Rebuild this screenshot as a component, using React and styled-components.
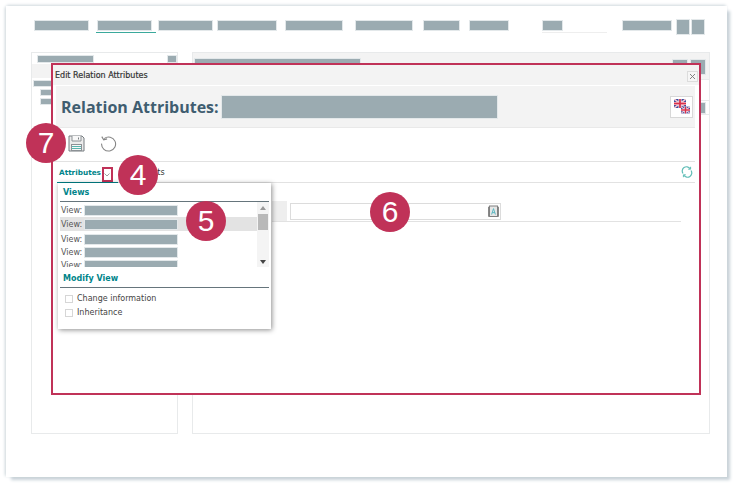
import React from 'react';
import styled, { createGlobalStyle } from 'styled-components';

const GlobalStyle = createGlobalStyle`
  html, body { margin: 0; padding: 0; background: #fff; }
  body { font-family: "DejaVu Sans", Tahoma, sans-serif; }
  * { box-sizing: border-box; }
`;

const Page = styled.div`
  position: relative;
  width: 741px;
  height: 487px;
  padding: 6px 14px 10px 6px;
  overflow: hidden;
  background: #fff;
`;

const Sheet = styled.div`
  height: 100%;
  padding: 13px 17px 43px 25px;
  background: #fff;
  display: flex;
  flex-direction: column;
  box-shadow: 0 -2px 3px -1px #d3dbdf, -2px 0 3px -1px #cfd8dc, 4px 4px 3px -1px #c8d2d8;
`;

// grey block that hides redacted text
const Mask = styled.div`
  flex: none;
  width: ${p => p.$w}px;
  height: ${p => p.$h || 11}px;
  margin-left: ${p => p.$ml || 0}px;
  background: #9babb1;
  outline: 1px solid #e3e8ea;
  outline-offset: -1px;
`;

const Nav = styled.div`
  display: flex;
  align-items: flex-start;
  height: 33px;
  padding-left: 3px;
`;

const NavItem = styled.div`
  flex: none;
  margin-left: ${p => p.$ml || 0}px;
  padding-top: 1px;
  padding-bottom: 2px;
  height: 14px;
  border-bottom: ${p => (p.$active ? '1px solid #3ba99c' : p.$faint ? '1px solid #eeeeee' : 'none')};
  width: ${p => p.$w}px;
`;

const Panels = styled.div`
  flex: 1;
  display: flex;
  gap: 14px;
`;

const Panel = styled.div`
  width: ${p => p.$w}px;
  flex: none;
  border: 1px solid #e8eaeb;
`;

const LeftTabs = styled.div`
  display: flex;
  justify-content: space-between;
  align-items: flex-start;
  height: 11px;
  padding: 2px 0 0 5px;
  background: #fff;
`;

const LeftBand = styled.div`
  height: 14px;
  background: #f3f3f3;
`;

const TreeRow = styled.div`
  margin: 2px 0 0 ${p => p.$indent}px;
`;

const RightHead = styled.div`
  display: flex;
  justify-content: space-between;
  height: 27px;
  padding: 5px 3px 0 1px;
  background: #f3f3f3;
  border-bottom: 1px solid #e8eaeb;
`;

const HeadButtons = styled.div`
  display: flex;
  gap: 2px;
  margin-top: 1px;
`;

const RightRow = styled.div`
  height: ${p => p.$h}px;
  display: flex;
  justify-content: flex-end;
  align-items: center;
  padding-right: 3px;
  border-bottom: 1px solid #e8eaeb;
`;

const Modal = styled.div`
  position: absolute;
  left: 51px;
  top: 63px;
  width: 650px;
  height: 332px;
  border: 2px solid #c03258;
  background: #fff;
  display: flex;
  flex-direction: column;
`;

const TitleBar = styled.div`
  height: 20px;
  flex: none;
  display: flex;
  align-items: center;
  justify-content: space-between;
  padding: 0 1px 0 2px;
  background: #f3f3f3;
  font-size: 8px;
  font-weight: 500;
  color: #333;
  -webkit-text-stroke: 0.2px #333;
`;

const CloseBtn = styled.div`
  width: 11px;
  height: 11px;
  margin-top: 2px;
  border: 1px solid #dcdcdc;
  background: #f6f6f6;
  color: #777;
  display: flex;
  align-items: center;
  justify-content: center;
`;

const Header = styled.div`
  flex: none;
  height: 42px;
  margin: 1px 4px 0 3px;
  padding: 0 2px 0 5px;
  display: flex;
  align-items: center;
  background: #f3f3f3;
  border-bottom: 1px solid #e9e9e9;
`;

const HeaderTitle = styled.div`
  font-family: "Open Sans", sans-serif;
  font-size: 16px;
  font-weight: 700;
  color: #3f5d70;
  white-space: nowrap;
`;

const FlagBtn = styled.div`
  margin-left: auto;
  width: 23px;
  height: 22px;
  border: 1px solid #d8d8d8;
  background: #fff;
  display: flex;
  align-items: center;
  justify-content: center;
`;

const Toolbar = styled.div`
  flex: none;
  height: 34px;
  display: flex;
  align-items: center;
  gap: 15px;
  padding: 0 0 2px 15px;
  margin-right: 4px;
  border-bottom: 1px solid #e2e2e2;
`;

const TabRow = styled.div`
  flex: none;
  height: 21px;
  margin: 0 4px 0 4px;
  display: flex;
  align-items: stretch;
  border-bottom: 1px solid #e2e2e2;
  position: relative;
`;

const ActiveTab = styled.div`
  width: 61px;
  padding-left: 2px;
  display: flex;
  align-items: center;
  gap: 1px;
  font-size: 7.3px;
  font-weight: 700;
  color: #00848a;
  border-bottom: 1px solid #00848a;
  margin-bottom: -1px;
`;

const Chevron = styled.div`
  align-self: flex-end;
  width: 11px;
  height: 15px;
  border: 2px solid #c03258;
  color: #888;
  display: flex;
  align-items: center;
  justify-content: center;
`;

const Tab = styled.div`
  display: flex;
  align-items: center;
  padding-left: 1px;
  font-size: 8px;
  color: #333;
`;

const Refresh = styled.div`
  margin-left: auto;
  padding-right: 2px;
  display: flex;
  align-items: center;
`;

const FormArea = styled.div`
  flex: none;
  margin: 18px 18px 0 219px;
  height: 21px;
  padding-bottom: 1px;
  border-bottom: 1px solid #e2e2e2;
  display: flex;
  align-items: flex-start;
`;

const FieldLabel = styled.div`
  width: 15px;
  height: 20px;
  background: #eeeeee;
`;

const Field = styled.div`
  margin: 2px 0 0 3px;
  width: 211px;
  height: 17px;
  border: 1px solid #dcdcdc;
  display: flex;
  align-items: center;
  justify-content: flex-end;
  padding-right: 0;
`;

const Dropdown = styled.div`
  position: absolute;
  left: 58px;
  top: 183px;
  width: 213px;
  height: 146px;
  padding: 0 2px;
  background: #fff;
  box-shadow: 1px 1px 5px rgba(0, 0, 0, 0.45);
`;

const GroupTitle = styled.div`
  height: ${p => p.$h}px;
  padding: ${p => p.$pt || 0}px 0 0 3px;
  display: flex;
  align-items: center;
  font-size: 8px;
  font-weight: 700;
  color: #00848a;
  border-bottom: 1px solid #66757c;
`;

const ListArea = styled.div`
  display: flex;
  height: 65px;
  overflow: hidden;
`;

const ViewList = styled.div`
  flex: 1;
  padding-top: 1px;
`;

const ViewRow = styled.div`
  height: ${p => p.$h || 14}px;
  margin-bottom: ${p => p.$mb || 0}px;
  padding-left: 1px;
  display: flex;
  align-items: center;
  gap: 2px;
  font-size: 8px;
  color: #555;
  background: ${p => (p.$selected ? '#e3e3e3' : 'transparent')};
`;

const Scrollbar = styled.div`
  width: 12px;
  background: #f4f4f4;
  position: relative;
  display: flex;
  flex-direction: column;
  align-items: center;
  justify-content: space-between;
  padding: 4px 0 3px;
  color: #555;
`;

const Thumb = styled.div`
  position: absolute;
  left: 1px;
  top: 12px;
  width: 10px;
  height: 16px;
  background: #b9b9b9;
`;

const CheckList = styled.div`
  padding: 6px 0 0 5px;
  display: flex;
  flex-direction: column;
  gap: 5px;
`;

const CheckRow = styled.div`
  display: flex;
  align-items: center;
  gap: 4px;
  height: 9px;
  font-size: 8px;
  color: #444;
`;

const Box = styled.div`
  width: 8px;
  height: 8px;
  border: 1px solid #d6d6d6;
  background: #fff;
`;

const Badge = styled.div`
  position: absolute;
  left: ${p => p.$x - 20}px;
  top: ${p => p.$y - 20}px;
  width: 40px;
  height: 40px;
  border-radius: 50%;
  background: #c03258;
  color: #fff;
  font-family: "Liberation Sans", Arial, sans-serif;
  font-size: 30px;
  display: flex;
  align-items: center;
  justify-content: center;
`;

const SaveIcon = () => (
  <svg width="17" height="17" viewBox="0 0 17 17" fill="none">
    <path d="M1 1h13l2 2v13H1z" fill="#ececec" stroke="#777c80" />
    <path d="M4 1v5h9V1" fill="#f8f8f8" stroke="#8c9195" />
    <path d="M10.5 2.5v2" stroke="#777c80" />
    <rect x="3.5" y="9.5" width="10" height="6" fill="#f8f8f8" stroke="#8c9195" />
    <path d="M4 11.5h9M4 13.5h9" stroke="#58b5ae" />
  </svg>
);

const UndoIcon = () => (
  <svg width="17" height="17" viewBox="0 0 17 17" fill="none" stroke="#858585" strokeWidth="1.1">
    <path d="M4.2 3.6A7 7 0 1 1 1.6 8.6" />
    <path d="M1.8 1.6l1.9 3.2 3.4-.9" />
  </svg>
);

const RefreshIcon = () => (
  <svg width="12" height="12" viewBox="0 0 12 12" fill="none" stroke="#5fbdb6" strokeWidth="1.2">
    <path d="M2 7.5A4.2 4.2 0 0 1 9 2.6" />
    <path d="M10 4.5A4.2 4.2 0 0 1 3 9.4" />
    <path d="M9.6 0.8v2.4H7.2M2.4 11.2V8.8h2.4" strokeWidth="1" />
  </svg>
);

const CloseIcon = () => (
  <svg width="7" height="7" viewBox="0 0 7 7" stroke="currentColor" strokeWidth="0.9">
    <path d="M1 1l5 5M6 1L1 6" />
  </svg>
);

const UkFlag = ({ x, y, w, h }) => (
  <svg x={x} y={y} width={w} height={h} viewBox="0 0 12 9">
    <rect width="12" height="9" fill="#3a4a9c" />
    <path d="M0 0l12 9M12 0L0 9" stroke="#f3c6cf" strokeWidth="1.6" />
    <path d="M6 0v9M0 4.5h12" stroke="#fff" strokeWidth="3" />
    <path d="M6 0v9M0 4.5h12" stroke="#d9304a" strokeWidth="1.8" />
  </svg>
);

const FlagsIcon = () => (
  <svg width="16" height="15" viewBox="0 0 16 15">
    <UkFlag x={0} y={0} w={12} h={9} />
    <UkFlag x={7} y={7} w={9} h={8} />
  </svg>
);

const DictIcon = () => (
  <svg width="13" height="13" viewBox="0 0 13 13" fill="none">
    <path d="M1 2l2-1v10l-2 1z" fill="#888" />
    <path d="M12 2l-2-1v10l2 1z" fill="#888" />
    <rect x="2.5" y="1" width="8" height="10.5" fill="#e6e6e6" stroke="#808080" />
    <path d="M4.6 9.5L6.5 3.6l1.9 5.9M5.2 7.6h2.6" stroke="#4fb4c0" strokeWidth="0.9" />
  </svg>
);

const views = [
  { selected: false, h: 14, mb: 0 },
  { selected: true, h: 14, mb: 2 },
  { selected: false, h: 13 },
  { selected: false, h: 13 },
  { selected: false, h: 13 },
];

const App = () => (
  <Page>
    <GlobalStyle />
    <Sheet>
      <Nav>
        <NavItem $w={55}><Mask $w={55} /></NavItem>
        <NavItem $ml={7} $w={60} $active><Mask $w={55} $ml={1} /></NavItem>
        <NavItem $ml={2} $w={55}><Mask $w={55} /></NavItem>
        <NavItem $ml={4} $w={60}><Mask $w={60} /></NavItem>
        <NavItem $ml={8} $w={58}><Mask $w={58} /></NavItem>
        <NavItem $ml={12} $w={58}><Mask $w={58} /></NavItem>
        <NavItem $ml={10} $w={37}><Mask $w={37} /></NavItem>
        <NavItem $ml={9} $w={40}><Mask $w={40} /></NavItem>
        <NavItem $ml={33} $w={65} $faint><Mask $w={21} /></NavItem>
        <NavItem $ml={15} $w={50}><Mask $w={50} /></NavItem>
        <Mask $w={14} $h={16} $ml={4} />
        <Mask $w={14} $h={16} $ml={1} />
      </Nav>
      <Panels>
        <Panel $w={147}>
          <LeftTabs>
            <Mask $w={57} $h={8} />
            <Mask $w={10} $h={8} />
          </LeftTabs>
          <LeftBand />
          <TreeRow $indent={1}><Mask $w={60} $h={7} /></TreeRow>
          <TreeRow $indent={8}><Mask $w={50} $h={7} /></TreeRow>
          <TreeRow $indent={8}><Mask $w={50} $h={7} /></TreeRow>
        </Panel>
        <Panel $w={518}>
          <RightHead>
            <Mask $w={167} $h={7} />
            <HeadButtons>
              <Mask $w={16} $h={16} />
              <Mask $w={16} $h={16} />
            </HeadButtons>
          </RightHead>
          <RightRow $h={21} />
          <RightRow $h={14}><Mask $w={10} $h={12} /></RightRow>
        </Panel>
      </Panels>
    </Sheet>

    <Modal>
      <TitleBar>
        Edit Relation Attributes
        <CloseBtn><CloseIcon /></CloseBtn>
      </TitleBar>
      <Header>
        <HeaderTitle>Relation Attributes:</HeaderTitle>
        <Mask $w={277} $h={24} $ml={2} />
        <FlagBtn><FlagsIcon /></FlagBtn>
      </Header>
      <Toolbar>
        <SaveIcon />
        <UndoIcon />
      </Toolbar>
      <TabRow>
        <ActiveTab>
          Attributes
          <Chevron>
            <svg width="6" height="4" viewBox="0 0 6 4" fill="none" stroke="currentColor" strokeWidth="0.8">
              <path d="M0.5 0.5L3 3l2.5-2.5" />
            </svg>
          </Chevron>
        </ActiveTab>
        <Tab>Documents</Tab>
        <Refresh><RefreshIcon /></Refresh>
      </TabRow>
      <FormArea>
        <FieldLabel />
        <Field><DictIcon /></Field>
      </FormArea>
    </Modal>

    <Dropdown>
      <GroupTitle $h={19}>Views</GroupTitle>
      <ListArea>
        <ViewList>
          {views.map((v, i) => (
            <ViewRow key={i} $selected={v.selected} $h={v.h} $mb={v.mb}>
              View:<Mask $w={94} $h={11} />
            </ViewRow>
          ))}
        </ViewList>
        <Scrollbar>
          <svg width="6" height="4" viewBox="0 0 6 4" fill="#999"><path d="M3 0l3 4H0z" /></svg>
          <Thumb />
          <svg width="6" height="4" viewBox="0 0 6 4" fill="#444"><path d="M3 4L0 0h6z" /></svg>
        </Scrollbar>
      </ListArea>
      <GroupTitle $h={21} $pt={2}>Modify View</GroupTitle>
      <CheckList>
        <CheckRow><Box />Change information</CheckRow>
        <CheckRow><Box />Inheritance</CheckRow>
      </CheckList>
    </Dropdown>

    <Badge $x={46} $y={143}>7</Badge>
    <Badge $x={138} $y={175}>4</Badge>
    <Badge $x={206} $y={221}>5</Badge>
    <Badge $x={390} $y={212}>6</Badge>
  </Page>
);

export default App;
